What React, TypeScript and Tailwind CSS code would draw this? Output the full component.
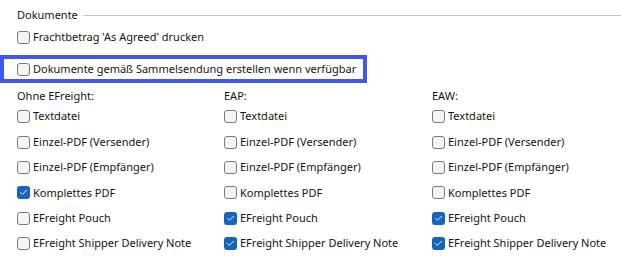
import { Check } from "lucide-react";

type Item = { label: string; checked: boolean };

const columns: { title: string; items: Item[] }[] = [
  {
    title: "Ohne EFreight:",
    items: [
      { label: "Textdatei", checked: false },
      { label: "Einzel-PDF (Versender)", checked: false },
      { label: "Einzel-PDF (Empfänger)", checked: false },
      { label: "Komplettes PDF", checked: true },
      { label: "EFreight Pouch", checked: false },
      { label: "EFreight Shipper Delivery Note", checked: false },
    ],
  },
  {
    title: "EAP:",
    items: [
      { label: "Textdatei", checked: false },
      { label: "Einzel-PDF (Versender)", checked: false },
      { label: "Einzel-PDF (Empfänger)", checked: false },
      { label: "Komplettes PDF", checked: false },
      { label: "EFreight Pouch", checked: true },
      { label: "EFreight Shipper Delivery Note", checked: true },
    ],
  },
  {
    title: "EAW:",
    items: [
      { label: "Textdatei", checked: false },
      { label: "Einzel-PDF (Versender)", checked: false },
      { label: "Einzel-PDF (Empfänger)", checked: false },
      { label: "Komplettes PDF", checked: false },
      { label: "EFreight Pouch", checked: true },
      { label: "EFreight Shipper Delivery Note", checked: true },
    ],
  },
];

function Box({ checked }: { checked: boolean }) {
  if (checked) {
    return (
      <span className="w-[13px] h-[13px] rounded-[3px] bg-[#1565c0] flex items-center justify-center shrink-0">
        <Check className="w-[9px] h-[9px] text-white" strokeWidth={2.5} />
      </span>
    );
  }
  return (
    <span className="w-[13px] h-[13px] rounded-[3px] border border-[#7a7a7a] bg-[#f5f5f5] shrink-0" />
  );
}

function CheckRow({ label, checked }: Item) {
  return (
    <div className="flex items-center gap-[3px] h-[25.4px] whitespace-nowrap">
      <Box checked={checked} />
      <span>{label}</span>
    </div>
  );
}

export default function App() {
  return (
    <div
      className="w-[621px] h-[259px] bg-white text-[11px] text-[#141414] overflow-hidden"
      style={{ fontFamily: '"Noto Sans", "Open Sans", sans-serif' }}
    >
      {/* Group header */}
      <div className="flex items-center pt-[7px] pl-[17px] h-[23px]">
        <span className="leading-4">Dokumente</span>
        <div className="flex-1 h-px bg-[#c4c4c4] ml-[5px]" />
      </div>

      <div className="flex items-center gap-[3px] pl-[17px] mt-[6px] h-4 whitespace-nowrap">
        <Box checked={false} />
        <span>Frachtbetrag 'As Agreed' drucken</span>
      </div>

      {/* Highlighted option */}
      <div className="mt-[10px] w-[367px] h-[28px] border-[4px] border-[#4157f2] flex items-center gap-[3px] pl-[13px] whitespace-nowrap">
        <Box checked={false} />
        <span>Dokumente gemäß Sammelsendung erstellen wenn verfügbar</span>
      </div>

      <div className="grid grid-cols-[207px_208px_1fr] pl-[17px] mt-[5px]">
        {columns.map((col) => (
          <div key={col.title} className="flex flex-col">
            <div className="h-4 leading-4">{col.title}</div>
            {col.items.map((it) => (
              <CheckRow key={it.label} {...it} />
            ))}
          </div>
        ))}
      </div>
    </div>
  );
}
